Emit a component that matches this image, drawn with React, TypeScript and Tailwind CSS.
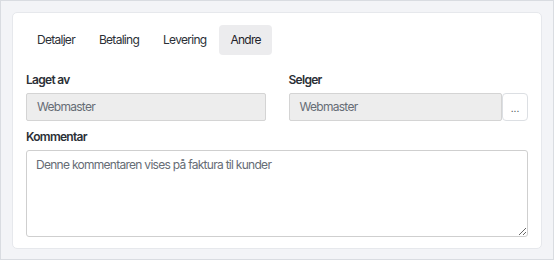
import React from 'react';

const tabs = ['Detaljer', 'Betaling', 'Levering', 'Andre'];

export default function App() {
  return (
    <div
      className="w-[554px] h-[260px] bg-[#f3f4f7] border border-[#d9dce1] p-[11px] text-[#2b2f36] tracking-[-0.72px]"
      style={{ fontFamily: 'Inter, "Liberation Sans", sans-serif' }}
    >
      <div className="h-[237px] bg-white border border-[#e6e8ec] rounded-[5px] px-[13px] pt-[12px]">
        <div className="flex gap-[2px]">
          {tabs.map((t) => (
            <div
              key={t}
              className={
                'h-[30px] px-[11px] flex items-center text-[12px] rounded-[4px] ' +
                (t === 'Andre' ? 'bg-[#ececee] text-[#1f2329]' : 'text-[#2b2f36]')
              }
            >
              {t}
            </div>
          ))}
        </div>
        <div className="grid grid-cols-2 gap-x-[23px] mt-[17px]">
          <div>
            <div className="text-[12px] font-semibold text-[#2b2f36] leading-[16px] mb-[5px]">Laget av</div>
            <div className="h-[28px] bg-[#ededed] border border-[#d4d4d4] rounded-[2px] flex items-center px-[10px] text-[12px] text-[#666c75]">
              Webmaster
            </div>
          </div>
          <div>
            <div className="text-[12px] font-semibold text-[#2b2f36] leading-[16px] mb-[5px]">Selger</div>
            <div className="flex">
              <div className="flex-1 h-[28px] bg-[#ededed] border border-[#d4d4d4] rounded-[2px] flex items-center px-[10px] text-[12px] text-[#666c75]">
                Webmaster
              </div>
              <button className="w-[26px] h-[28px] bg-white border border-[#dcdfe3] rounded-[4px] text-[10px] text-[#3a3f47] flex items-center justify-center pt-[3px] tracking-normal">
                ...
              </button>
            </div>
          </div>
        </div>
        <div className="text-[12px] font-semibold text-[#2b2f36] leading-[16px] mt-[8px] mb-[5px]">Kommentar</div>
        <textarea
          className="block w-full h-[87px] border border-[#cfcfcf] rounded-[3px] px-[9px] py-[5px] text-[12px] text-[#666c75] outline-none resize-y tracking-[-0.72px]"
          defaultValue="Denne kommentaren vises på faktura til kunder"
        />
      </div>
    </div>
  );
}
